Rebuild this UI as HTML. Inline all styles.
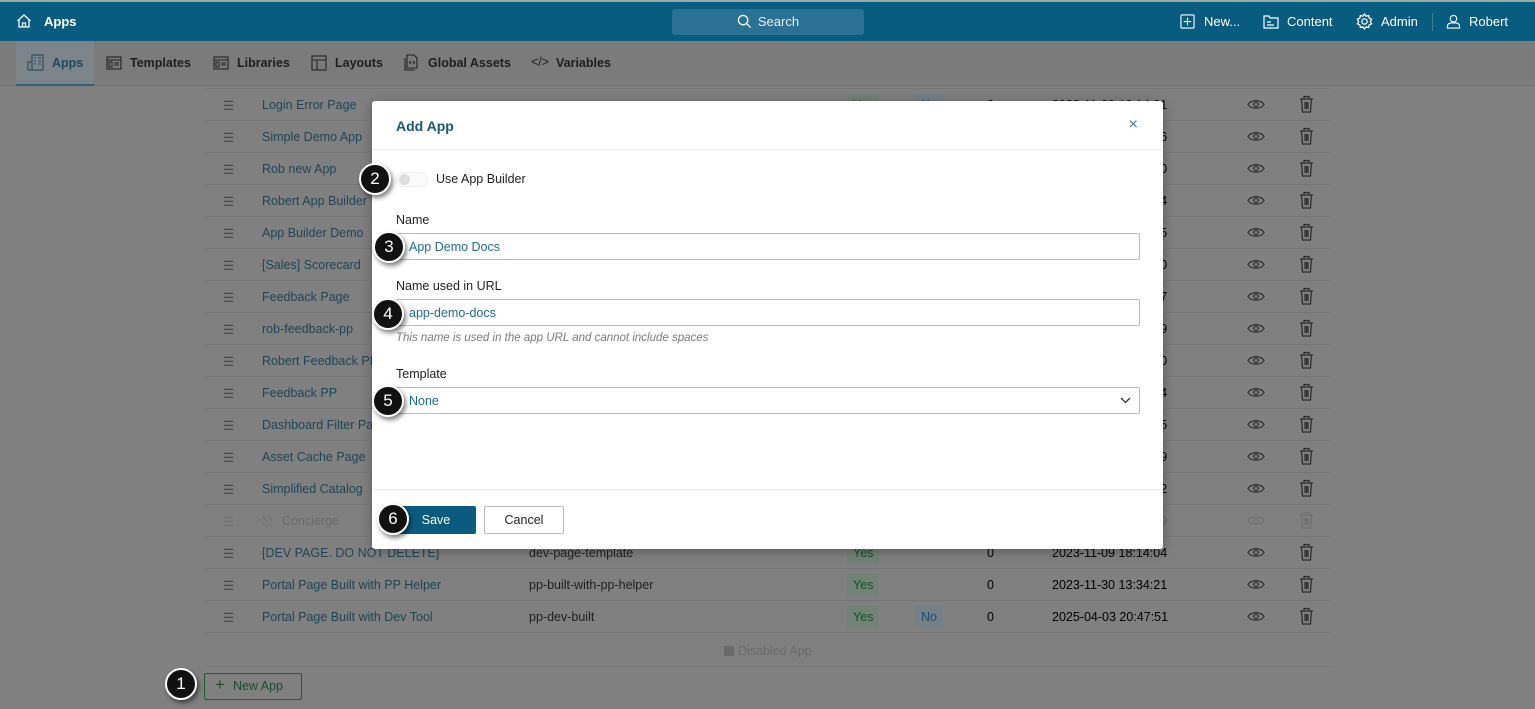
<!DOCTYPE html>
<html><head><meta charset="utf-8"><style>
*{box-sizing:border-box;margin:0;padding:0}
body{width:1535px;height:709px;overflow:hidden;background:#808080;font-family:"Liberation Sans",sans-serif;position:relative;font-size:12.5px}
.top{position:absolute;left:0;top:0;width:1535px;height:41px;background:#085c80;color:#fff;border-top:2px solid #9aa}
.top .t{position:absolute;top:12px;font-size:13px}
.search{position:absolute;left:672px;top:7px;width:192px;height:26px;background:#2a7195;border-radius:3px;color:#e8eef2;font-size:13px;text-align:center;line-height:26px}
.tabs{position:absolute;left:0;top:41px;width:1535px;height:45px;background:#7b7b7b;border-bottom:1px solid #737373}
.tab{position:absolute;top:15px;font-size:12.5px;color:#1e1e1e;font-weight:bold}
.tab.a{color:#1f4a5e}
.actbg{position:absolute;left:16px;top:41px;width:78px;height:45px;background:#7d858a;border-bottom:2px solid #32607a}
.row{position:absolute;left:205px;width:1125px;height:32px;border-bottom:1px solid #767676}
.row span{position:absolute;top:9px;font-size:12.5px}
.ham{left:18px;color:#4a4a4a}
.nm{left:57px;color:#1f4456}
.url{left:324px;color:#1e1e1e}
.badge{position:absolute;top:5px!important;height:22px;line-height:22px;padding:0 6px;background:#738278;color:#17502a}
.modal{position:absolute;left:372px;top:101px;width:791px;height:448px;background:#fff;border-radius:3px;box-shadow:0 2px 12px rgba(0,0,0,.3)}
.mk{position:absolute;width:32px;height:32px;border-radius:50%;background:#111;border:2px solid #fff;color:#fff;font-size:17px;text-align:center;line-height:28px;box-shadow:2px 3px 5px rgba(0,0,0,.5);z-index:5}
.lbl{position:absolute;left:24px;font-size:12.5px;color:#222}
.inp{position:absolute;left:24px;width:744px;height:27px;border:1px solid #bbb;border-radius:2px;color:#1d6b93;font-size:12.5px;padding:6px 12px}
</style></head><body>
<div class="top">
<svg style="position:absolute;left:16px;top:11px" width="16" height="16" viewBox="0 0 16 16" fill="none" stroke="#fff" stroke-width="1.2"><path d="M1.5 8L8 2l6.5 6M3 7v7h10V7M6.5 14v-4h3v4"/></svg>
<span class="t" style="left:44px;font-weight:bold">Apps</span>
<div class="search"><svg style="vertical-align:-3px;margin-right:6px" width="15" height="15" viewBox="0 0 16 16" fill="none" stroke="#fff" stroke-width="1.4"><circle cx="6.5" cy="6.5" r="5"/><path d="M10.5 10.5l4 4"/></svg>Search</div>
<svg style="position:absolute;left:1180px;top:12px" width="15" height="15" viewBox="0 0 16 16" fill="none" stroke="#fff" stroke-width="1.2"><rect x="1" y="1" width="14" height="14" rx="1"/><path d="M8 4v8M4 8h8"/></svg><span class="t" style="left:1204px">New...</span>
<svg style="position:absolute;left:1263px;top:12px" width="16" height="15" viewBox="0 0 16 15" fill="none" stroke="#fff" stroke-width="1.2"><path d="M1 2h5l1 2h8v10H1zM4 8h4M4 11h7"/></svg><span class="t" style="left:1287px">Content</span>
<svg style="position:absolute;left:1356px;top:11px" width="17" height="17" viewBox="0 0 16 16" fill="none" stroke="#fff" stroke-width="1.2"><circle cx="8" cy="8" r="2.5"/><path d="M8 1l1.5 2 2.4-.6.5 2.4 2.3 1L13.5 8l1.2 2.2-2.3 1-.5 2.4-2.4-.6L8 15l-1.5-2-2.4.6-.5-2.4-2.3-1L2.5 8 1.3 5.8l2.3-1 .5-2.4 2.4.6z"/></svg><span class="t" style="left:1381px">Admin</span>
<div style="position:absolute;left:1432px;top:11px;width:1px;height:18px;background:#3d7d9a"></div>
<svg style="position:absolute;left:1446px;top:12px" width="15" height="15" viewBox="0 0 16 16" fill="none" stroke="#fff" stroke-width="1.2"><circle cx="8" cy="5" r="3.5"/><path d="M1.5 15v-2c0-2 2-3.5 4-3.5h5c2 0 4 1.5 4 3.5v2z"/></svg><span class="t" style="left:1469px">Robert</span>
</div>
<div class="tabs"></div><div class="actbg"></div>
<svg style="position:absolute;left:27px;top:54px" width="17" height="17" viewBox="0 0 17 17" fill="none" stroke="#2a4a5a" stroke-width="1.1"><rect x="5" y="1" width="11" height="15"/><rect x="1" y="8" width="4" height="8"/><path d="M7 4h2M11 4h3M7 7h2M11 7h3M7 10h2M11 10h3"/></svg>
<span class="tab a" style="left:52px;top:56px">Apps</span>
<svg style="position:absolute;left:106px;top:56px" width="16" height="14" viewBox="0 0 16 14" fill="none" stroke="#222" stroke-width="1.1"><rect x="1" y="1" width="14" height="12"/><path d="M1 4h14M3 6h3v5H3zM8 7h5M8 9h5"/></svg>
<span class="tab" style="left:130px;top:56px">Templates</span>
<svg style="position:absolute;left:213px;top:56px" width="16" height="14" viewBox="0 0 16 14" fill="none" stroke="#222" stroke-width="1.1"><rect x="1" y="1" width="14" height="12"/><path d="M1 4h14M3 6h3v5H3zM8 7h5M8 9h5"/></svg>
<span class="tab" style="left:237px;top:56px">Libraries</span>
<svg style="position:absolute;left:311px;top:55px" width="16" height="16" viewBox="0 0 16 16" fill="none" stroke="#222" stroke-width="1.1"><rect x="1" y="1" width="14" height="14"/><path d="M1 5h14M6 5v10"/></svg>
<span class="tab" style="left:335px;top:56px">Layouts</span>
<svg style="position:absolute;left:404px;top:54px" width="15" height="17" viewBox="0 0 15 17" fill="none" stroke="#222" stroke-width="1.1"><path d="M3 1h7l3 3v10H3z"/><path d="M1 4v12h10"/><path d="M7 7l-1.5 1.5L7 10M9 7l1.5 1.5L9 10"/></svg>
<span class="tab" style="left:428px;top:56px">Global Assets</span>
<span class="tab" style="left:531px;top:55px;font-weight:normal">&lt;/&gt;</span>
<span class="tab" style="left:556px;top:56px">Variables</span>
<div style="position:absolute;left:205px;top:88px;width:1125px;height:1px;background:#777"></div>

<div id="rows"></div>
<script>
var names=["Login Error Page","Simple Demo App","Rob new App","Robert App Builder","App Builder Demo","[Sales] Scorecard","Feedback Page","rob-feedback-pp","Robert Feedback PP","Feedback PP","Dashboard Filter Page","Asset Cache Page","Simplified Catalog","Concierge","[DEV PAGE. DO NOT DELETE]","Portal Page Built with PP Helper","Portal Page Built with Dev Tool"];
var urls={14:"dev-page-template",15:"pp-built-with-pp-helper",16:"pp-dev-built"};
var tails=["01","26","10","04","45","30","17","39","00","14","15","29","12","19"];
var dates={14:"2023-11-09 18:14:04",15:"2023-11-30 13:34:21",16:"2025-04-03 20:47:51"};
var h="";
for(var i=0;i<17;i++){var y=89+i*32;var dim=i==13;
h+='<div class="row" style="top:'+y+'px"><span class="ham" style="'+(dim?'color:#727272':'')+'">&#9776;</span>';
h+='<span class="nm" style="'+(dim?'color:#6a6a6a;left:57px':'')+'">'+(dim?'<span style="position:static;margin-right:10px">&#9099;</span>':'')+names[i]+'</span>';
if(urls[i])h+='<span class="url">'+urls[i]+'</span>';
h+='<span class="badge" style="left:642px">Yes</span>';
if(i<=12||i==16)h+='<span class="badge" style="left:710px;background:#748088;color:#244a60">No</span>';
var d=dates[i]||('2023-11-09 18:14:'+tails[i]);
h+='<span style="left:782px">0</span><span style="left:847px;'+(dim?'color:#6a6a6a':'')+'">'+d+'</span>';
var sc=dim?"#707070":"#2a2a2a";
h+='<svg style="position:absolute;left:1042px;top:9px" width="18" height="13" viewBox="0 0 18 13" fill="none" stroke="'+sc+'" stroke-width="1.2"><path d="M1 6.5C4 1.5 14 1.5 17 6.5 14 11.5 4 11.5 1 6.5z"/><circle cx="9" cy="6.5" r="2.2"/></svg>';
h+='<svg style="position:absolute;left:1094px;top:6px" width="15" height="18" viewBox="0 0 15 18" fill="none" stroke="'+sc+'" stroke-width="1.2"><path d="M1 4h13M5 4V1.5h5V4M2.5 4l1 13h8l1-13M6 7v7M7.5 7v7M9 7v7"/></svg>';
h+='</div>';}
document.getElementById("rows").innerHTML=h;
</script>
<div style="position:absolute;left:724px;top:646px;width:10px;height:10px;background:#6a6a6a"></div>
<span style="position:absolute;left:738px;top:644px;color:#6a6a6a">Disabled App</span>
<div style="position:absolute;left:205px;top:666px;width:1125px;height:1px;background:#777"></div>
<div style="position:absolute;left:204px;top:673px;width:98px;height:27px;border:1px solid #215e36;border-radius:2px;color:#1c4d2c;padding:5px 10px;font-size:12.5px"><span style="font-size:17px;line-height:12px;margin-right:8px">+</span>New App</div>
<div class="mk" style="left:165px;top:668px">1</div>

<div class="modal">
<div style="position:absolute;left:24px;top:17px;font-size:14px;font-weight:bold;color:#1b5778">Add App</div>
<div style="position:absolute;right:25px;top:15px;font-size:16px;color:#3c7a9a">&#215;</div>
<div style="position:absolute;left:0;top:48px;width:100%;height:1px;background:#e8e8e8"></div>
<div style="position:absolute;left:24px;top:71px;width:32px;height:15px;border-radius:8px;border:1px solid #eee;background:#fafafa"><div style="width:11px;height:11px;border-radius:50%;background:#ddd;margin:1px 2px"></div></div>
<div class="lbl" style="left:64px;top:71px">Use App Builder</div>
<div class="lbl" style="top:112px">Name</div>
<div class="inp" style="top:132px">App Demo Docs</div>
<div class="lbl" style="top:178px">Name used in URL</div>
<div class="inp" style="top:198px">app-demo-docs</div>
<div class="lbl" style="top:231px;font-style:italic;color:#7a7a7a;font-size:11.5px">This name is used in the app URL and cannot include spaces</div>
<div class="lbl" style="top:266px">Template</div>
<div class="inp" style="top:286px">None<svg style="position:absolute;right:8px;top:9px" width="11" height="7" viewBox="0 0 11 7" fill="none" stroke="#333" stroke-width="1.3"><path d="M1 1l4.5 4.5L10 1"/></svg></div>
<div style="position:absolute;left:0;top:388px;width:100%;height:1px;background:#e8e8e8"></div>
<div style="position:absolute;left:24px;top:405px;width:80px;height:28px;background:#0b5b80;border-radius:2px;color:#fff;text-align:center;line-height:28px;font-size:12.5px">Save</div>
<div style="position:absolute;left:112px;top:405px;width:80px;height:28px;border:1px solid #bbb;border-radius:2px;color:#222;text-align:center;line-height:26px;font-size:12.5px">Cancel</div>
</div>
<div class="mk" style="left:359px;top:163px">2</div>
<div class="mk" style="left:373px;top:231px">3</div>
<div class="mk" style="left:372px;top:298px">4</div>
<div class="mk" style="left:372px;top:385px">5</div>
<div class="mk" style="left:377px;top:503px">6</div>
</body></html>
